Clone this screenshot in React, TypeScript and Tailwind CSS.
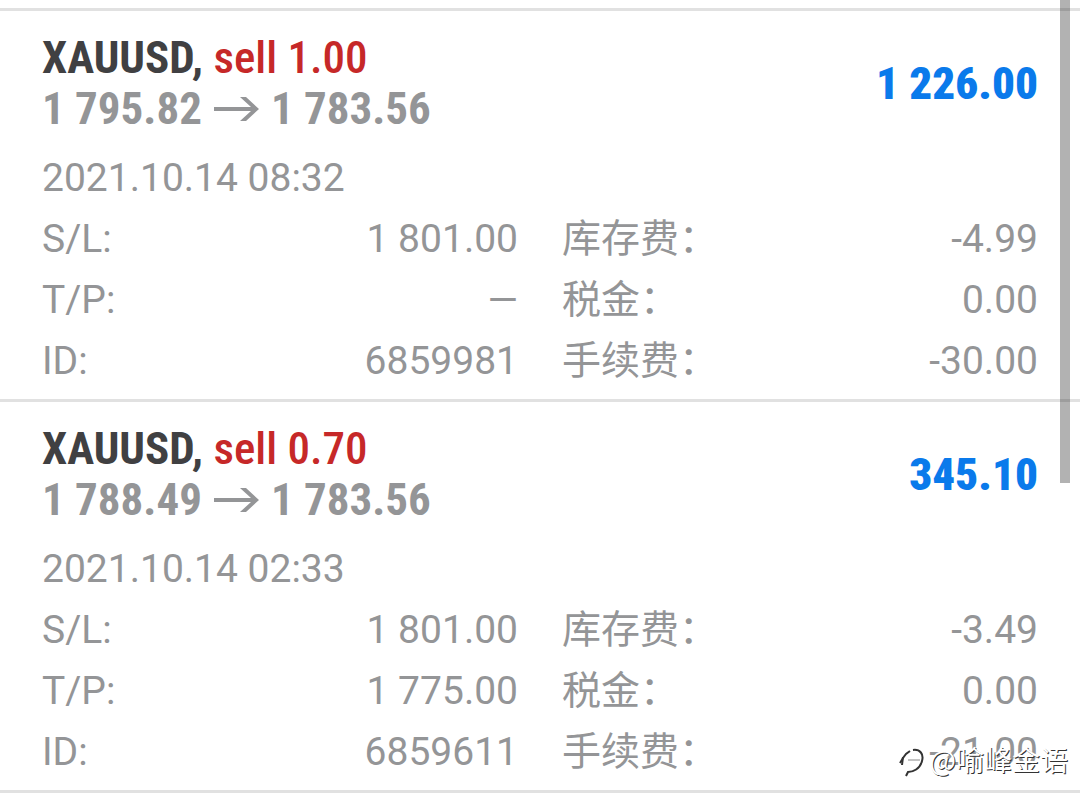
type Field = { label: string; value: string };

type Deal = {
  volume: string;
  open: string;
  close: string;
  profit: string;
  time: string;
  fields: Field[];
};

const deals: Deal[] = [
  {
    volume: "1.00",
    open: "1 795.82",
    close: "1 783.56",
    profit: "1 226.00",
    time: "2021.10.14 08:32",
    fields: [
      { label: "S/L:", value: "1 801.00" },
      { label: "库存费：", value: "-4.99" },
      { label: "T/P:", value: "—" },
      { label: "税金：", value: "0.00" },
      { label: "ID:", value: "6859981" },
      { label: "手续费：", value: "-30.00" },
    ],
  },
  {
    volume: "0.70",
    open: "1 788.49",
    close: "1 783.56",
    profit: "345.10",
    time: "2021.10.14 02:33",
    fields: [
      { label: "S/L:", value: "1 801.00" },
      { label: "库存费：", value: "-3.49" },
      { label: "T/P:", value: "1 775.00" },
      { label: "税金：", value: "0.00" },
      { label: "ID:", value: "6859611" },
      { label: "手续费：", value: "-21.00" },
    ],
  },
];

function Arrow() {
  return (
    <svg className="h-[26px] w-[45px]" viewBox="0 0 45 26" fill="currentColor" aria-hidden="true">
      <path d="M0 11H37L26 1H32L45 13L32 25H26L37 15H0Z" />
    </svg>
  );
}

function DealCard({ deal }: { deal: Deal }) {
  return (
    <article className="border-b-3 border-[#e1e1e1] px-[42px] pt-[21px] pb-[7px]">
      <header className="flex items-center justify-between font-['Roboto_Condensed','Roboto','Liberation_Sans',sans-serif] text-[45px] leading-[51px] font-bold whitespace-nowrap">
        <div>
          <h2 className="text-[#404042]">
            XAUUSD, <span className="font-medium text-[#c62828]">sell {deal.volume}</span>
          </h2>
          <p className="flex items-center gap-3 text-[#949597]">
            {deal.open}
            <Arrow />
            {deal.close}
          </p>
        </div>
        <strong className="text-[#0a7aeb]">{deal.profit}</strong>
      </header>
      <p className="mt-[14px]">{deal.time}</p>
      <dl className="grid grid-cols-2 gap-x-11">
        {deal.fields.map((field) => (
          <div key={field.label} className="flex justify-between">
            <dt>{field.label}</dt>
            <dd>{field.value}</dd>
          </div>
        ))}
      </dl>
    </article>
  );
}

function Watermark() {
  return (
    <div className="absolute right-3 bottom-4 flex items-center gap-1 font-['Noto_Sans_CJK_SC',sans-serif] text-[28px] leading-8 font-normal text-white [text-shadow:1px_1px_0px_#333]">
      <svg className="h-9 w-7" viewBox="0 -5 28 36" fill="none" stroke="#333" aria-hidden="true">
        <path d="M2 17L5 12L8 8L12 5" strokeWidth="2" />
        <path d="M5 11L4 19" strokeWidth="2" />
        <path d="M10 14H22" stroke="#888" />
        <path d="M15 4C22 3 26 8 24 15C22 23 15 26 10 26L8 30" strokeWidth="2" />
      </svg>
      <span>@喻峰金语</span>
    </div>
  );
}

export default function App() {
  return (
    <div className="flow-root min-h-screen bg-white">
      <main className="relative mt-2 border-t-3 border-[#e1e1e1] font-['Roboto','Noto_Sans_CJK_SC',sans-serif] text-[39px] leading-[61px] text-[#949597]">
        {deals.map((deal) => (
          <DealCard key={deal.time} deal={deal} />
        ))}
        <Watermark />
      </main>
      <div className="absolute top-0 right-[10px] h-[483px] w-[10px] bg-black/30" />
    </div>
  );
}
